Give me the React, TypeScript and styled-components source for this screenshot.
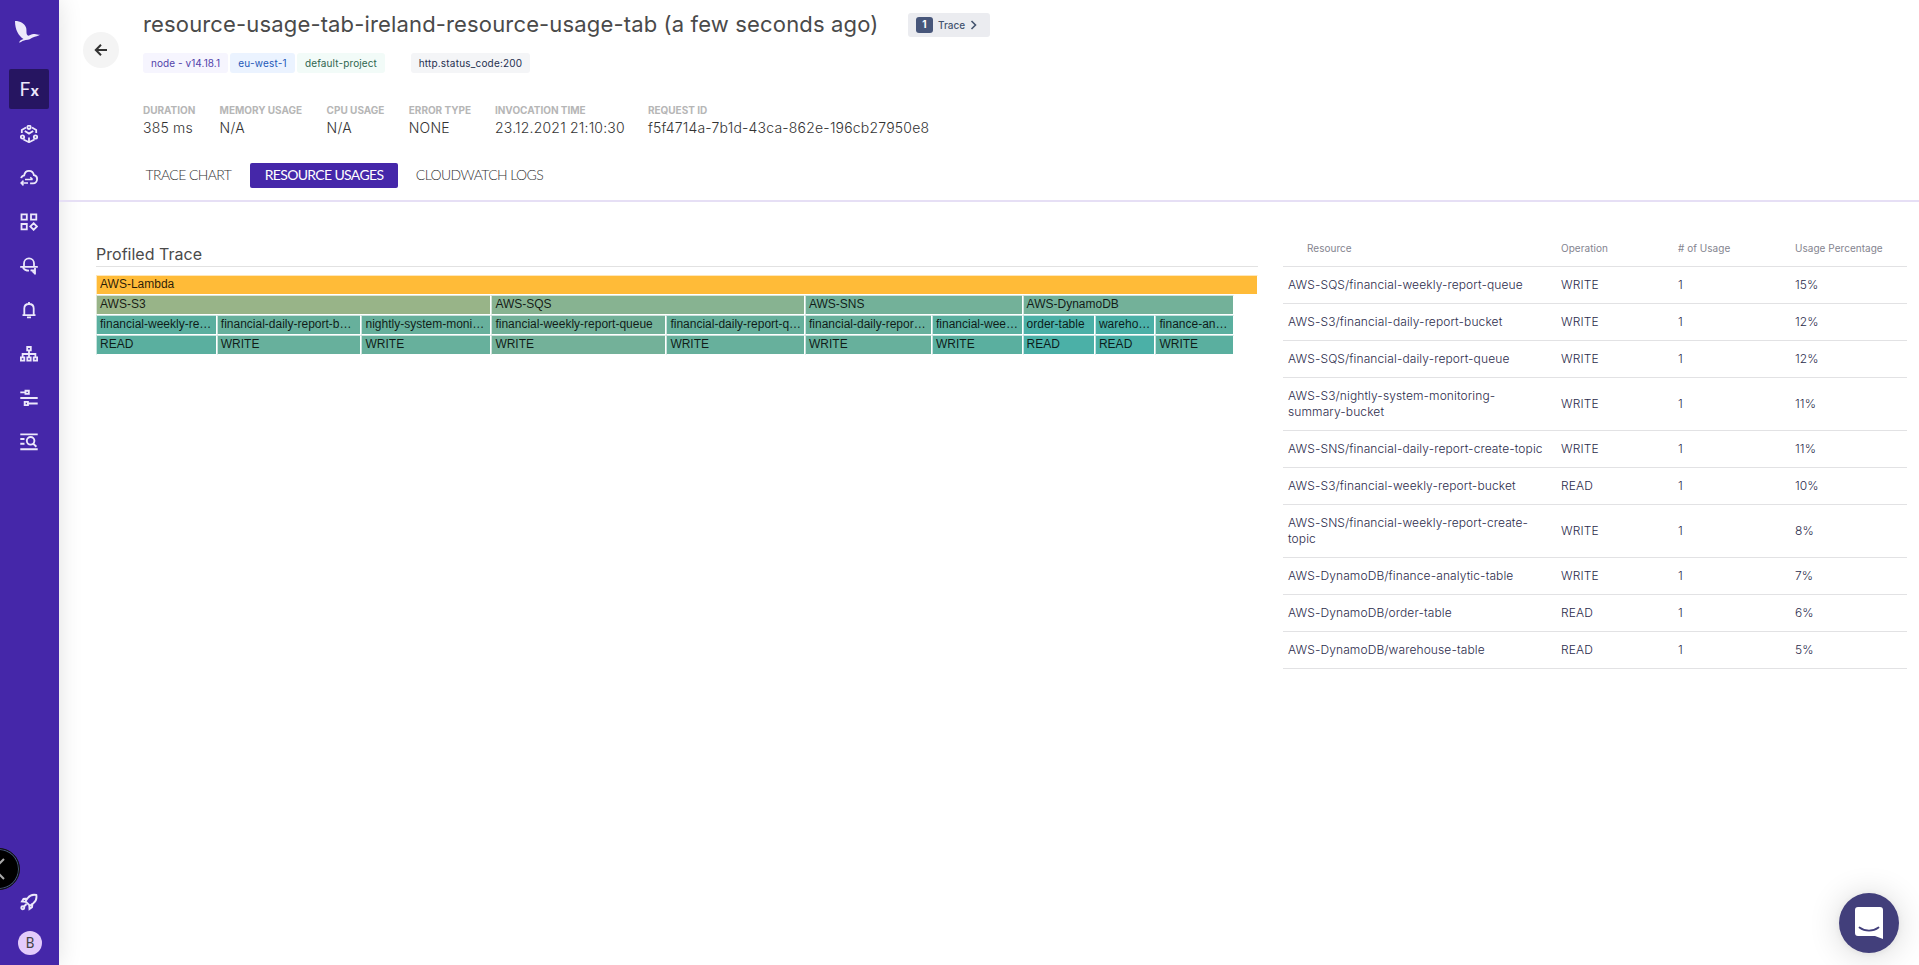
import React from 'react';
import styled, { createGlobalStyle } from 'styled-components';

const GlobalStyle = createGlobalStyle`
  * { box-sizing: border-box; }
  body {
    margin: 0;
    background: #fff;
    font-family: Inter, "Liberation Sans", sans-serif;
    color: #4a4a4a;
    overflow: hidden;
  }
`;

const Page = styled.div`
  display: flex;
  width: 100%;
  height: 965px;
  position: relative;
  overflow: hidden;
`;

const Sidebar = styled.nav`
  flex: 0 0 59px;
  height: 100%;
  background: #4527a9;
  box-shadow: 0 0 24px rgba(0, 0, 0, 0.12);
  display: flex;
  flex-direction: column;
  align-items: center;
  color: #ece8fb;
`;

const Logo = styled.div`
  height: 69px;
  width: 59px;
  svg { display: block; }
`;

const NavItem = styled.div<{ $active?: boolean }>`
  width: 40px;
  height: 40px;
  margin-bottom: ${(p) => (p.$active ? 5 : 4)}px;
  margin-right: 1px;
  border-radius: 2px;
  background: ${(p) => (p.$active ? '#261561' : 'transparent')};
  display: flex;
  align-items: center;
  justify-content: center;
  svg { display: block; }
`;

const FxLabel = styled.span`
  font: 400 19px/20px Lato, sans-serif;
  padding-top: 1px;
  b { font-size: 15px; font-weight: 900; margin-left: 0.5px; }
`;

const NavFooter = styled.div`
  margin-top: auto;
  display: flex;
  flex-direction: column;
  align-items: center;
  padding-bottom: 10px;
  > svg { margin-right: 1px; }
`;

const Avatar = styled.div`
  width: 24px;
  height: 24px;
  margin: 20px 0 0 1px;
  border-radius: 50%;
  background: #e3cbfb;
  color: #444;
  font: 400 14px/24px Roboto, sans-serif;
  text-align: center;
`;

const Main = styled.main`
  flex: 1;
  min-width: 0;
  display: flex;
  flex-direction: column;
`;

const Header = styled.header`
  display: flex;
  height: 202px;
  border-bottom: 2px solid #e6dff5;
  padding-left: 24px;
`;

const BackButton = styled.button`
  width: 36px;
  height: 36px;
  margin: 32px 24px 0 0;
  padding: 0;
  border: 0;
  border-radius: 50%;
  background: #f4f4f4;
  display: flex;
  align-items: center;
  justify-content: center;
`;

const HeaderBody = styled.div`
  display: flex;
  flex-direction: column;
`;

const TitleRow = styled.div`
  display: flex;
  align-items: center;
  height: 50px;
`;

const Title = styled.h1`
  margin: 0;
  width: 765px;
  padding-bottom: 2px;
  font-size: 22px;
  font-weight: 400;
  letter-spacing: 0.15px;
  color: #4a4a4a;
  white-space: nowrap;
`;

const TraceButton = styled.button`
  display: flex;
  align-items: center;
  width: 82px;
  height: 24px;
  padding: 0 8px;
  border: 0;
  border-radius: 3px;
  background: #ebecf0;
  color: #44546f;
  font: 500 10px Inter, sans-serif;
  letter-spacing: 0;
  svg { margin-left: 5px; }
`;

const TraceCount = styled.span`
  width: 17px;
  height: 16px;
  margin-right: 5px;
  border-radius: 3px;
  background: #47567a;
  color: #fff;
  font-weight: 700;
  line-height: 15px;
  text-align: center;
`;

const TagRow = styled.div`
  display: flex;
  margin-top: 3px;
`;

const Tag = styled.span<{ $bg: string; $fg: string; $w: number; $gap?: number; $track?: number }>`
  width: ${(p) => p.$w}px;
  height: 20px;
  margin-right: ${(p) => p.$gap ?? 2}px;
  border-radius: 3px;
  background: ${(p) => p.$bg};
  color: ${(p) => p.$fg};
  font-size: 10px;
  line-height: 20px;
  letter-spacing: ${(p) => p.$track ?? 0.2}px;
  text-align: center;
  white-space: nowrap;
`;

const Facts = styled.dl`
  display: flex;
  margin: 31px 0 0;
  height: 36px;
`;

const Fact = styled.div<{ $w: number }>`
  width: ${(p) => p.$w}px;
  white-space: nowrap;
  dt {
    font-size: 10px;
    font-weight: 700;
    line-height: 13px;
    letter-spacing: -0.02px;
    color: #b6b6b6;
  }
  dd {
    margin: 2px 0 0;
    font-size: 14px;
    font-weight: 300;
    line-height: 18px;
    letter-spacing: 0.2px;
    color: #333;
  }
`;

const Tabs = styled.div`
  display: flex;
  margin-top: 23px;
`;

const Tab = styled.div<{ $active?: boolean; $w: number }>`
  width: ${(p) => p.$w}px;
  height: 25px;
  border-radius: 2px;
  font: ${(p) => (p.$active ? 400 : 300)} 14px/24px Lato, sans-serif;
  letter-spacing: ${(p) => (p.$active ? -0.65 : -0.6)}px;
  text-align: center;
  white-space: nowrap;
  background: ${(p) => (p.$active ? '#4527a9' : 'transparent')};
  color: ${(p) => (p.$active ? '#fff' : '#333')};
`;

const Content = styled.div`
  display: flex;
  align-items: flex-start;
  padding: 29px 12px 0 37px;
  gap: 25px;
`;

const Profile = styled.section`
  width: 1162px;
`;

const ProfileTitle = styled.h2`
  margin: 0 0 8px;
  height: 36px;
  padding-top: 12px;
  border-bottom: 1px solid #e2e2e2;
  font-size: 16px;
  font-weight: 400;
  line-height: 22px;
  letter-spacing: 0.02px;
  color: #4a4a4a;
`;

const FlameRow = styled.div`
  display: flex;
  height: 20px;
`;

const Frame = styled.div<{ $w: number; $bg: string }>`
  width: ${(p) => p.$w}px;
  height: 20px;
  border: 1px solid;
  border-color: rgba(255, 255, 255, 0.65) #fff #fff rgba(255, 255, 255, 0.65);
  background: ${(p) => p.$bg};
  padding-left: 3px;
  white-space: nowrap;
  font: 400 12px/16px "Liberation Sans", Arial, sans-serif;
  color: rgba(0, 0, 0, 0.85);
`;

const Table = styled.table`
  width: 624px;
  border-collapse: collapse;
  table-layout: fixed;
  font-size: 12px;
  font-weight: 300;
  line-height: 16px;
  letter-spacing: 0.11px;
  color: #2b2b4b;
`;

const HeadCell = styled.th<{ $indent?: boolean }>`
  height: 35px;
  padding: 0 5px 0 ${(p) => (p.$indent ? 24 : 5)}px;
  border-bottom: 1px solid #e2e2e4;
  text-align: left;
  font-size: 10px;
  font-weight: 400;
  letter-spacing: 0.03px;
  color: #84848f;
`;

const Cell = styled.td`
  padding: 10px 5px;
  border-bottom: 1px solid #e2e2e4;
  white-space: pre;
`;

const ChatButton = styled.button`
  position: absolute;
  right: 20px;
  bottom: 12px;
  width: 60px;
  height: 60px;
  padding: 0;
  border: 0;
  border-radius: 50%;
  background: #423f7b;
  box-shadow: 0 1px 6px rgba(0, 0, 0, 0.06), 0 2px 32px rgba(0, 0, 0, 0.16);
  display: flex;
  align-items: center;
  justify-content: center;
`;

const EdgeHandle = styled.div`
  position: absolute;
  left: -22px;
  top: 848px;
  width: 42px;
  height: 42px;
  border: 1px solid #111;
  border-radius: 50%;
  background: #000;
  box-shadow: inset 0 0 0 1px #457;
  svg { position: absolute; left: 17px; top: 8px; }
`;

const Stroke = ({ children, w = 1.8 }: { children: React.ReactNode; w?: number }) => (
  <svg width="18" height="18" viewBox="0 0 18 18" fill="none" stroke="currentColor" strokeWidth={w}>
    {children}
  </svg>
);

const icons = [
  <Stroke key="cube" w={1.8}>
    <path d="M6 2.500 1.800 5v3M12 2.500 16.200 5v3M3.500 14.500 9 17.200l5.500-2.700M4.800 6 9 8.600 13.200 6M9 12.500V17" />
    <circle cx="9" cy="2.300" r="1.700" />
    <circle cx="2.500" cy="12" r="1.700" />
    <circle cx="15.500" cy="12" r="1.700" />
  </Stroke>,
  <Stroke key="cloud">
    <path d="M1.200 9.200C1.400 7.600 2.800 6.600 4.200 6.400 4.600 3.600 6.400 1.800 9 1.800c2.700 0 4.500 1.800 4.900 4.400 2 .3 3.200 1.800 3.200 3.800 0 2.500-1.700 4.300-4 4.300h-3" />
    <path d="M5 10.600h7.500M10.300 8.300l2.300 2.300M1 14h7M3.500 11.600 1.100 14l2.400 2.400" strokeWidth="1.500" />
  </Stroke>,
  <Stroke key="grid">
    <path d="M1.500 1.400h5.300v5.300H1.500zM11 1.400h5.300v5.300H11zM1.500 11h5.300v5.300H1.500zM13.600 10.200l3.300 3.300-3.300 3.300-3.300-3.300z" />
  </Stroke>,
  <Stroke key="scope">
    <path d="M4 9V6.400C4 3.400 6.200 1.400 9 1.400s5 2 5 5V9M.2 9.800h17.600M3 10.500c1 2 3 3.200 6 3.200M15 11v6.500M10.500 13.300l4.300.2M11.200 12.800l3.500 3.500" />
  </Stroke>,
  <Stroke key="bell">
    <path d="M2.500 14.200h13M4.300 14V7.500C4.300 4.700 6.300 3 9 3s4.700 1.700 4.700 4.500V14M9 1v2M7 16.400h4" />
  </Stroke>,
  <Stroke key="tree" w={1.8}>
    <path d="M7.200 2h3.600v3.400H7.200zM.9 12.400h3.400v3.200H.9zM7.300 12.400h3.400v3.200H7.300zM13.700 12.400h3.400v3.200h-3.400zM9 5.400v7M2.600 12V9h12.800v3" />
  </Stroke>,
  <Stroke key="sliders" w={1.9}>
    <path d="M.3 3.400h4.900M5.500 1.700h3.300v3.200H5.500zM.3 9h17.400M4.700 12.900h3.200v3.200H4.700zM8 14.500h9.700" />
  </Stroke>,
  <Stroke key="search" w={1.9}>
    <path d="M.3 1.400h17.400M.3 6h4.200M.3 10.800h4.200M.3 16.200h17.400M13 10.500l3.400 3.200" />
    <circle cx="10.600" cy="7.800" r="3.800" />
  </Stroke>,
];

const teal = '#4bb0a7';
const sea = '#5aaf9f';
const jade = '#67b09c';
const sage = '#73b199';

type FrameData = [string, number, string];

const flame: FrameData[][] = [
  [['AWS-Lambda', 1162, '#ffbb38']],
  [['AWS-S3', 395.4, '#98b488'], ['AWS-SQS', 313.6, '#87b391'], ['AWS-SNS', 217.6, sage], ['AWS-DynamoDB', 211.4, sage]],
  [
    ['financial-weekly-re…', 120.8, sea],
    ['financial-daily-report-b…', 144.7, jade],
    ['nightly-system-moni…', 129.9, jade],
    ['financial-weekly-report-queue', 175, sage],
    ['financial-daily-report-q…', 138.6, jade],
    ['financial-daily-repor…', 127, jade],
    ['financial-wee…', 90.6, sea],
    ['order-table', 72.4, teal],
    ['wareho…', 60.5, teal],
    ['finance-an…', 78.5, sea],
  ],
];
const operations = ['READ', 'WRITE', 'WRITE', 'WRITE', 'WRITE', 'WRITE', 'WRITE', 'READ', 'READ', 'WRITE'];
flame.push(flame[2].map(([, w, color], i): FrameData => [operations[i], w, color]));

const usages = [
  ['AWS-SQS/financial-weekly-report-queue', 'WRITE', '15%'],
  ['AWS-S3/financial-daily-report-bucket', 'WRITE', '12%'],
  ['AWS-SQS/financial-daily-report-queue', 'WRITE', '12%'],
  ['AWS-S3/nightly-system-monitoring-\nsummary-bucket', 'WRITE', '11%'],
  ['AWS-SNS/financial-daily-report-create-topic', 'WRITE', '11%'],
  ['AWS-S3/financial-weekly-report-bucket', 'READ', '10%'],
  ['AWS-SNS/financial-weekly-report-create-\ntopic', 'WRITE', '8%'],
  ['AWS-DynamoDB/finance-analytic-table', 'WRITE', '7%'],
  ['AWS-DynamoDB/order-table', 'READ', '6%'],
  ['AWS-DynamoDB/warehouse-table', 'READ', '5%'],
];

const facts: [string, string, number][] = [
  ['DURATION', '385 ms', 76.6],
  ['MEMORY USAGE', 'N/A', 107],
  ['CPU USAGE', 'N/A', 82.2],
  ['ERROR TYPE', 'NONE', 86.2],
  ['INVOCATION TIME', '23.12.2021 21:10:30', 153],
  ['REQUEST ID', 'f5f4714a-7b1d-43ca-862e-196cb27950e8', 300],
];

export default function App() {
  return (
    <Page>
      <GlobalStyle />
      <Sidebar>
        <Logo>
          <svg width="59" height="69" viewBox="0 0 59 69" fill="currentColor">
            <path d="M15 21c5.500 0 9.500 2.500 11 6.500 1 3-.2 6 1.500 7.800 1.500 1.200 3.500-1 6-1.200 1.500-.2 4 1 6.800.4-2 1.700-5 1.800-7.500 3-2 1-4 2.500-7 2.500-2.500.2-4 1.800-6.600 2.700.2-1.700 1.500-2.600 4.300-3.600C18.500 35.500 15 30 15 21z" />
          </svg>
        </Logo>
        <NavItem $active>
          <FxLabel>F<b>x</b></FxLabel>
        </NavItem>
        {icons.map((icon) => <NavItem key={icon.key}>{icon}</NavItem>)}
        <NavFooter>
          <Stroke w={1.9}>
            <path d="M16.300 2c-4-.8-6.800.7-8.500 3L5.500 8.300l4.400 4.400 3.400-2.400c2.200-1.700 3.700-4.500 3-8.300zM7.500 5.500 3.500 6 2 8.500l3.500.2M12.500 10.500l-.5 3.700L9.500 16l-.2-3.500" />
            <circle cx="2.800" cy="14.800" r="1.500" />
            <path d="M4 13.500 6.500 11" />
          </Stroke>
          <Avatar>B</Avatar>
        </NavFooter>
      </Sidebar>
      <Main>
        <Header>
          <BackButton>
            <svg width="14" height="12" viewBox="0 0 14 12" fill="none" stroke="#333" strokeWidth="2">
              <path d="M13 6H2M7 .8 1.800 6 7 11.200" />
            </svg>
          </BackButton>
          <HeaderBody>
            <TitleRow>
              <Title>resource-usage-tab-ireland-resource-usage-tab (a few seconds ago)</Title>
              <TraceButton>
                <TraceCount>1</TraceCount>
                Trace
                <svg width="7" height="10" viewBox="0 0 7 10" fill="none" stroke="currentColor" strokeWidth="1.600">
                  <path d="M1.500 1 5.500 5 1.500 9" />
                </svg>
              </TraceButton>
            </TitleRow>
            <TagRow>
              <Tag $bg="#f6f5fe" $fg="#5243aa" $w={85} $track={0.07}>node - v14.18.1</Tag>
              <Tag $bg="#ebf3ff" $fg="#2458b8" $w={65}>eu-west-1</Tag>
              <Tag $bg="#f2fbf8" $fg="#2f6650" $w={88} $gap={26} $track={0.12}>default-project</Tag>
              <Tag $bg="#f4f5f7" $fg="#253050" $w={119}>http.status_code:200</Tag>
            </TagRow>
            <Facts>
              {facts.map(([label, value, w]) => (
                <Fact key={label} $w={w}>
                  <dt>{label}</dt>
                  <dd>{value}</dd>
                </Fact>
              ))}
            </Facts>
            <Tabs>
              <Tab $w={91}>TRACE CHART</Tab>
              <Tab $w={16} />
              <Tab $active $w={148}>RESOURCE USAGES</Tab>
              <Tab $w={163}>CLOUDWATCH LOGS</Tab>
            </Tabs>
          </HeaderBody>
        </Header>
        <Content>
          <Profile>
            <ProfileTitle>Profiled Trace</ProfileTitle>
            {flame.map((row, r) => (
              <FlameRow key={r}>
                {row.map(([label, w, color], i) => <Frame key={i} $w={w} $bg={color}>{label}</Frame>)}
              </FlameRow>
            ))}
          </Profile>
          <Table>
            <colgroup>
              <col width="273" />
              <col width="117" />
              <col width="117" />
              <col width="117" />
            </colgroup>
            <thead>
              <tr>
                <HeadCell $indent>Resource</HeadCell>
                <HeadCell>Operation</HeadCell>
                <HeadCell># of Usage</HeadCell>
                <HeadCell>Usage Percentage</HeadCell>
              </tr>
            </thead>
            <tbody>
              {usages.map(([resource, operation, share]) => (
                <tr key={resource}>
                  <Cell>{resource}</Cell>
                  <Cell>{operation}</Cell>
                  <Cell>1</Cell>
                  <Cell>{share}</Cell>
                </tr>
              ))}
            </tbody>
          </Table>
        </Content>
      </Main>
      <EdgeHandle>
        <svg width="10" height="24" viewBox="0 0 10 24" fill="none" stroke="#aaa" strokeWidth="2">
          <path d="M8 2-2 12 8 22" />
        </svg>
      </EdgeHandle>
      <ChatButton>
        <svg width="28" height="32" viewBox="0 0 28 32">
          <path d="M3 0h22a3 3 0 0 1 3 3v29l-8-3H3a3 3 0 0 1-3-3V3a3 3 0 0 1 3-3z" fill="#fff" />
          <path d="M4.500 20.500c5.500 4.200 13.500 4.200 19 0" fill="none" stroke="#423f7b" strokeWidth="1.800" strokeLinecap="round" />
        </svg>
      </ChatButton>
    </Page>
  );
}
